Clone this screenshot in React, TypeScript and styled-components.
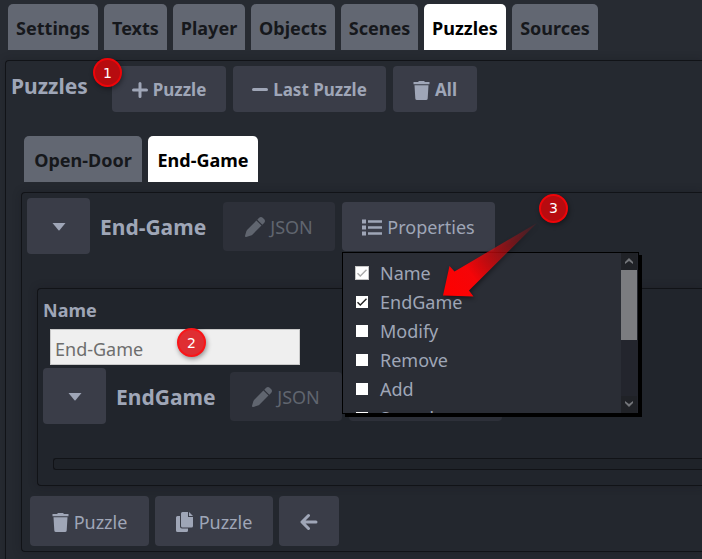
import React, { useState } from "react";
import styled, { createGlobalStyle, css } from "styled-components";

const GlobalStyle = createGlobalStyle`
  * { box-sizing: border-box; }
  html { height: 100%; background: #272b32; }
  body {
    margin: 0;
    min-height: 100%;
    overflow: hidden;
    color: #9fa6b7;
    font-family: "Noto Sans", "Open Sans", sans-serif;
    font-size: 18px;
    line-height: 24px;
  }
  button, input { font: inherit; color: inherit; }
`;

const Page = styled.main`
  padding: 4px 0 0 5px;
`;

const TabBar = styled.nav<{ $inner?: boolean }>`
  display: flex;
  gap: 6px;
  padding-left: ${(p) => (p.$inner ? 18 : 3)}px;
  margin: ${(p) => (p.$inner ? "24px 0 10px" : "0 0 10px")};
`;

const Tab = styled.button<{ $active?: boolean; $width: number }>`
  min-width: ${(p) => p.$width}px;
  height: 46px;
  padding: 2px 0 0;
  border: 0;
  border-radius: 5px 5px 0 0;
  background: ${(p) => (p.$active ? "#ffffff" : "#626772")};
  color: ${(p) => (p.$active ? "#000000" : "#16181c")};
  font-weight: 700;
  white-space: nowrap;
`;

const Panel = styled.section<{ $level: number }>`
  border: 1px solid #111317;
  border-right: 0;
  border-radius: 4px 0 0 4px;
  box-shadow: 0 0 8px rgba(20, 20, 28, 0.3);
  background: ${(p) => ["#252930", "#23272e", "#21252c"][p.$level]};
  margin-left: ${(p) => [0, 15, 10][p.$level]}px;
  padding: ${(p) => ["5px 0 20px", "5px 0 5px 5px", "5px 0 15px 5px"][p.$level]};
`;

const InnerPanel = styled(Panel)`
  margin-top: 34px;
  margin-bottom: 10px;
`;

const Row = styled.div<{ $indent?: number; $gap?: number }>`
  display: flex;
  align-items: center;
  gap: ${(p) => p.$gap ?? 7}px;
  padding-left: ${(p) => p.$indent ?? 0}px;
`;

const Heading = styled.h1`
  min-width: 94px;
  margin: 0 0 6px;
  font-size: 21px;
  line-height: 28px;
`;

const Title = styled.h2<{ $width: number }>`
  min-width: ${(p) => p.$width}px;
  margin: 0 7px 0 3px;
  padding-top: 2px;
  font-size: 21px;
  line-height: 28px;
  white-space: nowrap;
`;

const Button = styled.button<{ $width: number; $height?: number; $bold?: boolean }>`
  display: inline-flex;
  align-items: center;
  justify-content: center;
  gap: 5px;
  min-width: ${(p) => p.$width}px;
  height: ${(p) => p.$height ?? 49}px;
  padding: 2px 0 0;
  border: 0;
  border-radius: 4px;
  background: #3a3d48;
  white-space: nowrap;
  ${(p) => p.$bold && css`font-size: 17px; font-weight: 700;`}
  &:disabled {
    background: #2d3039;
    color: #60656f;
  }
  svg { flex: none; }
`;

const Icon = styled.svg`
  display: block;
  fill: currentColor;
`;

const NameField = styled.label`
  display: block;
  margin-top: 4px;
  font-weight: 700;
`;

const NameInput = styled.input`
  display: block;
  width: 250px;
  height: 36px;
  margin: 7px 0 3px 7px;
  padding: 3px 4px 0;
  border: 1px solid #c9c9c9;
  border-radius: 0;
  background: #efefef;
  color: #6d6d6d;
  font-weight: 400;
`;

const EmptyBox = styled.div`
  height: 12px;
  margin: 34px 0 0 10px;
  border: 1px solid #111317;
  border-right: 0;
  border-radius: 3px 0 0 3px;
  background: #1f2329;
`;

const Anchor = styled.div`
  position: relative;
`;

const Menu = styled.div`
  position: absolute;
  z-index: 2;
  top: 50px;
  left: 0;
  display: flex;
  width: 297px;
  height: 162px;
  overflow: hidden;
  border: 1px solid #000;
  background: #2a2d35;
  box-shadow: 3px 3px 0 #000;
`;

const Options = styled.div`
  flex: 1;
  padding: 6px 0 0 13px;
`;

const Option = styled.label`
  display: flex;
  align-items: center;
  gap: 12px;
  height: 29px;
`;

const Check = styled.input`
  appearance: none;
  width: 12px;
  height: 12px;
  margin: 0;
  background: #fff;
  &:checked {
    background: #fff url("data:image/svg+xml,%3Csvg xmlns='http://www.w3.org/2000/svg' viewBox='0 0 12 12'%3E%3Cpath d='M1.5 6.2 4.3 9 10.5 2.8' fill='none' stroke='%23222' stroke-width='1.4'/%3E%3C/svg%3E");
  }
  &:disabled {
    background: #fff url("data:image/svg+xml,%3Csvg xmlns='http://www.w3.org/2000/svg' viewBox='0 0 12 12'%3E%3Cpath d='M1.5 6.2 4.3 9 10.5 2.8' fill='none' stroke='%23aaa' stroke-width='1.4'/%3E%3C/svg%3E");
    outline: 1px solid #c5c5c5;
  }
`;

const ScrollTrack = styled.div`
  display: flex;
  flex-direction: column;
  width: 17px;
  padding-right: 1px;
  background: #23252d;
`;

const ScrollArrow = styled.div`
  display: grid;
  place-items: center;
  height: 17px;
  background: #202227;
  color: #74767b;
`;

const ScrollThumb = styled.div`
  height: 70px;
  margin-bottom: auto;
  background: #7b7c80;
`;

const Badge = styled.span<{ $x: number; $y: number; $light?: boolean }>`
  position: absolute;
  z-index: 4;
  left: ${(p) => p.$x}px;
  top: ${(p) => p.$y}px;
  display: grid;
  place-items: center;
  width: 29px;
  height: 29px;
  border: 2px solid ${(p) => (p.$light ? "#fa1518" : "#ee0509")};
  border-radius: 50%;
  background: ${(p) => (p.$light ? "#df2e32" : "#b70b0f")};
  box-shadow: 1px 2px 5px rgba(0, 0, 0, 0.4);
  color: #fff;
  font-family: "DejaVu Sans", sans-serif;
  font-size: 14px;
  font-weight: 400;
  line-height: 20px;
`;

const Arrow = styled.svg`
  position: absolute;
  z-index: 3;
  left: 98px;
  top: 18px;
  filter: drop-shadow(1px 2px 2px rgba(0, 0, 0, 0.45));
  pointer-events: none;
`;

const Trash = () => (
  <Icon width="17" height="19" viewBox="0 0 17 19">
    <path d="M6 0h5l1 1h4.500v2.300H.5V1H5zM1.500 4.300h14L14.700 17.500Q14.600 19 13 19H4Q2.400 19 2.300 17.500z" />
  </Icon>
);
const Plus = () => (
  <Icon width="16" height="16" viewBox="0 0 16 16">
    <path d="M8 1.500v13M1.500 8h13" fill="none" stroke="currentColor" strokeWidth="3" strokeLinecap="round" />
  </Icon>
);
const Minus = () => (
  <Icon width="16" height="16" viewBox="0 0 16 16">
    <path d="M1.500 7.500h13" fill="none" stroke="currentColor" strokeWidth="3" strokeLinecap="round" />
  </Icon>
);
const Pencil = () => (
  <Icon width="20" height="20" viewBox="0 0 512 512">
    <path d="M362.700 19.300 314.300 67.700 444.300 197.700 492.700 149.300C517.700 124.300 517.700 83.800 492.700 58.800L453.300 19.300C428.300 -5.700 387.800 -5.700 362.800 19.300zM291.700 90.300 58.600 323.500C48.200 333.900 40.600 346.800 36.400 360.900L1 481.200C-1.500 489.700.8 498.800 7 505S22.300 513.400 30.700 511L151 475.600C165.100 471.400 178 463.800 188.400 453.400L421.700 220.300z" />
  </Icon>
);
const List = () => (
  <Icon width="20" height="17" viewBox="0 0 20 17">
    <path d="M0 .5h4v4H0zM0 6.500h4v4H0zM0 12.500h4v4H0zM6 1.200h14v2.600H6zM6 7.200h14v2.600H6zM6 13.200h14v2.600H6z" />
  </Icon>
);
const Copy = () => (
  <Icon width="18" height="20" viewBox="0 0 18 20">
    <path d="M6.500 0H12v5h5v9q0 1.500-1.500 1.500h-9Q5 15.500 5 14V1.500Q5 0 6.500 0zM13 0l4 4h-4zM1.500 4H4v10.500q0 2 2 2h6v2Q12 20 10.500 20h-9Q0 20 0 18.500v-13Q0 4 1.500 4z" />
  </Icon>
);
const Back = () => (
  <Icon width="18" height="18" viewBox="0 0 18 18">
    <path d="M16 9H2.500M8.500 2.500 2 9l6.500 6.500" fill="none" stroke="currentColor" strokeWidth="3" strokeLinecap="round" strokeLinejoin="round" />
  </Icon>
);
const Caret = () => (
  <Icon width="14" height="8" viewBox="0 0 14 8">
    <path d="M.5 0h13L7.500 7.200q-.5.500-1 0z" />
  </Icon>
);
const ScrollUp = () => (
  <Icon width="8" height="6" viewBox="0 0 8 6"><path d="M0 4 4 0l4 4v2L4 3 0 6z" /></Icon>
);
const ScrollDown = () => (
  <Icon width="8" height="6" viewBox="0 0 8 6"><path d="M0 0l4 3 4-3v2L4 6 0 2z" /></Icon>
);

const pageTabs: [string, number][] = [
  ["Settings", 90], ["Texts", 63], ["Player", 72], ["Objects", 84],
  ["Scenes", 77], ["Puzzles", 82], ["Sources", 86],
];
const puzzleTabs: [string, number][] = [["Open-Door", 118], ["End-Game", 110]];
const properties = ["Name", "EndGame", "Modify", "Remove", "Add", "Sound"];

function PropertyMenu() {
  const [checked, setChecked] = useState(["Name", "EndGame"]);
  const toggle = (name: string) =>
    setChecked((c) => (c.includes(name) ? c.filter((n) => n !== name) : [...c, name]));
  return (
    <Menu>
      <Options>
        {properties.map((name) => (
          <Option key={name}>
            <Check
              type="checkbox"
              checked={checked.includes(name)}
              disabled={name === "Name"}
              onChange={() => toggle(name)}
            />
            {name}
          </Option>
        ))}
      </Options>
      <ScrollTrack aria-hidden>
        <ScrollArrow><ScrollUp /></ScrollArrow>
        <ScrollThumb />
        <ScrollArrow><ScrollDown /></ScrollArrow>
      </ScrollTrack>
    </Menu>
  );
}

function PointerArrow() {
  return (
    <Arrow width="100" height="80" viewBox="0 0 100 80">
      <defs>
        <linearGradient id="fade" gradientUnits="userSpaceOnUse" x1="3" y1="75" x2="97" y2="4">
          <stop offset="0" stopColor="#ff0000" />
          <stop offset="0.3" stopColor="#f50508" />
          <stop offset="1" stopColor="#c01015" stopOpacity="0.15" />
        </linearGradient>
      </defs>
      <path d="M3 75.500 9.500 46l5 5.500L97 3 29 70.500l4.500 6z" fill="url(#fade)" />
    </Arrow>
  );
}

export default function App() {
  const [page, setPage] = useState("Puzzles");
  const [puzzle, setPuzzle] = useState("End-Game");
  const [name, setName] = useState("End-Game");
  return (
    <>
      <GlobalStyle />
      <Page>
        <TabBar>
          {pageTabs.map(([t, w]) => (
            <Tab key={t} $width={w} $active={t === page} onClick={() => setPage(t)}>{t}</Tab>
          ))}
        </TabBar>
        <Panel $level={0}>
          <Anchor>
            <Row $indent={5}>
              <Heading>Puzzles</Heading>
              <Button $width={114} $height={46} $bold><Plus />Puzzle</Button>
              <Button $width={153} $height={46} $bold><Minus />Last Puzzle</Button>
              <Button $width={84} $height={46} $bold><Trash />All</Button>
            </Row>
            <Badge $x={87} $y={-8}>1</Badge>
          </Anchor>
          <TabBar $inner>
            {puzzleTabs.map(([t, w]) => (
              <Tab key={t} $width={w} $active={t === puzzle} onClick={() => setPuzzle(t)}>{t}</Tab>
            ))}
          </TabBar>
          <Panel $level={1}>
            <Row>
              <Button $width={63} $height={56} aria-label="Toggle End-Game"><Caret /></Button>
              <Title $width={109}>End-Game</Title>
              <Button $width={112} disabled><Pencil />JSON</Button>
              <Anchor>
                <Button $width={153} aria-expanded><List />Properties</Button>
                <PropertyMenu />
                <PointerArrow />
                <Badge $x={197} $y={-8}>3</Badge>
              </Anchor>
            </Row>
            <InnerPanel $level={2}>
              <Anchor>
                <NameField>
                  Name
                  <NameInput value={name} onChange={(e) => setName(e.target.value)} />
                </NameField>
                <Badge $x={134} $y={30} $light>2</Badge>
              </Anchor>
              <Row>
                <Button $width={63} $height={56} aria-label="Toggle EndGame"><Caret /></Button>
                <Title $width={100}>EndGame</Title>
                <Button $width={112} disabled><Pencil />JSON</Button>
                <Button $width={153} disabled><List />Properties</Button>
              </Row>
              <EmptyBox />
            </InnerPanel>
            <Row $indent={3} $gap={6}>
              <Button $width={119} $height={50}><Trash />Puzzle</Button>
              <Button $width={118} $height={50}><Copy />Puzzle</Button>
              <Button $width={60} $height={50} aria-label="Back"><Back /></Button>
            </Row>
          </Panel>
        </Panel>
      </Page>
    </>
  );
}
